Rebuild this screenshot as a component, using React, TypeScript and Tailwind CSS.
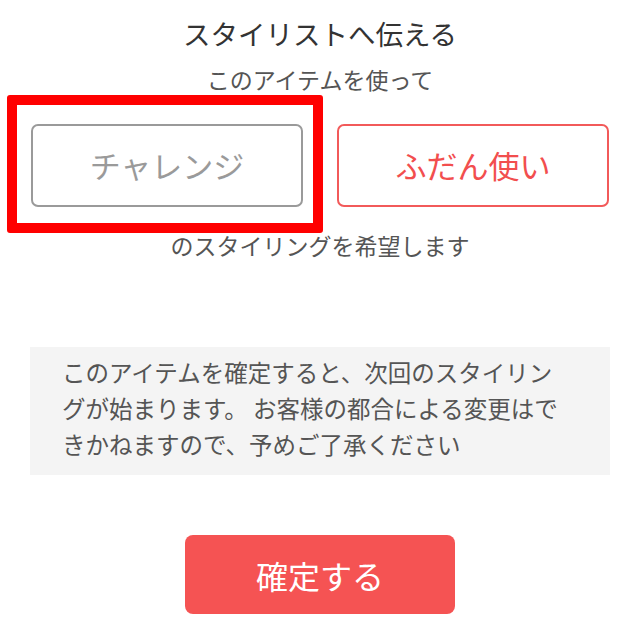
export default function App() {
  return (
    <div
      className="w-[640px] h-[640px] bg-white flex flex-col items-center"
      style={{ fontFamily: '"Noto Sans CJK JP", "Noto Sans", sans-serif' }}
    >
      <h1 className="mt-[15px] text-[27.5px] leading-[36px] text-[#333333] font-normal">
        スタイリストへ伝える
      </h1>
      <p className="mt-[13px] text-[23px] leading-[30px] text-[#555555]">
        このアイテムを使って
      </p>
      <div className="mt-[30px] w-[578px] flex gap-[34px]">
        <div className="relative">
          <button className="w-[272px] h-[83px] border-2 border-[#9a9a9a] rounded-[7px] text-[31px] text-[#9a9a9a] bg-white">
            チャレンジ
          </button>
          <div className="absolute -left-[24px] -top-[29px] -right-[20px] -bottom-[26px] border-[10px] border-[#ff0000] rounded-[3px] pointer-events-none" />
        </div>
        <button className="w-[272px] h-[83px] border-2 border-[#f25a5a] rounded-[7px] text-[31px] text-[#f24e4e] bg-white">
          ふだん使い
        </button>
      </div>
      <p className="mt-[23px] text-[23px] leading-[30px] text-[#555555]">
        のスタイリングを希望します
      </p>
      <div className="mt-[87px] w-[580px] h-[128px] bg-[#f4f4f4] pl-[32px] pr-[40px] pt-[7px]">
        <p className="text-[23.5px] leading-[36px] text-[#555555]">
          このアイテムを確定すると、次回のスタイリングが始まります。 お客様の都合による変更はできかねますので、予めご了承ください
        </p>
      </div>
      <button className="mt-[60px] w-[270px] h-[79px] bg-[#f55353] rounded-[8px] text-white text-[32px]">
        確定する
      </button>
    </div>
  );
}
